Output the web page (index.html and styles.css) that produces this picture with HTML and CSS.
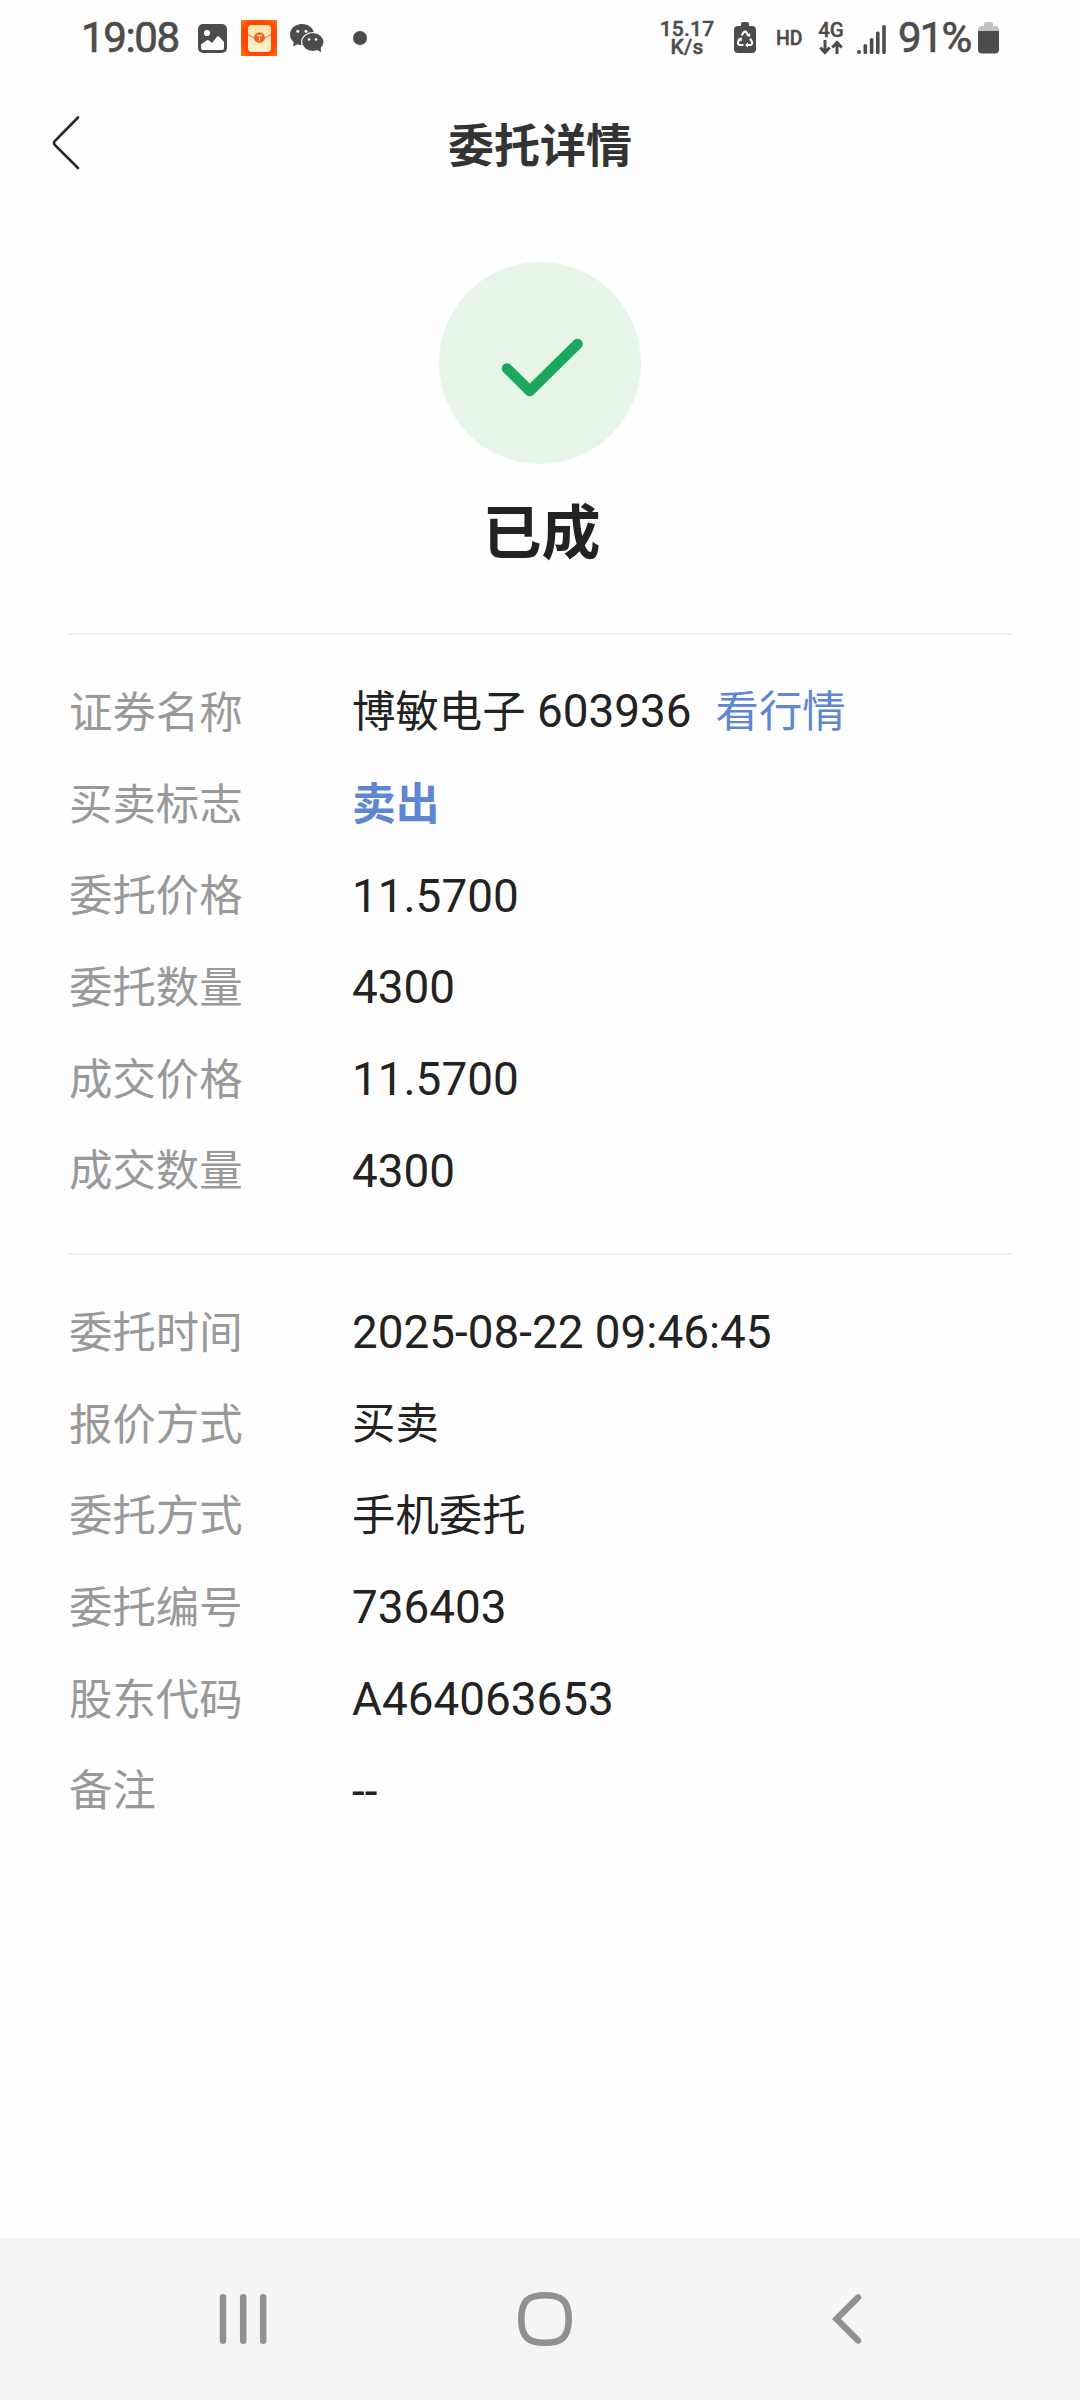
FILE: index.html
```html
<!DOCTYPE html>
<html lang="zh-CN">
<head>
<meta charset="utf-8">
<title>委托详情</title>
<link rel="stylesheet" href="styles.css">
</head>
<body>
<div class="screen">
  <header class="status">
    <div class="status-left">
      <span class="clock">19:08</span>
      <svg class="ico-photo" width="29" height="29" viewBox="0 0 29 29"><rect width="29" height="29" rx="5" fill="#4c4c4c"/><circle cx="9" cy="9" r="3.1" fill="#fefefe"/><path d="M3 20.5L9 16.300q1-.6 2 .2l3 2.500 5-6.200q1.200-1.300 2.400 0l4.600 5.200V24q0 2-2 2H5q-2 0-2-2z" fill="#fefefe"/></svg>
      <svg class="ico-packet" width="36" height="36" viewBox="0 0 36 36">
        <defs><radialGradient id="glow" r=".7"><stop offset="0" stop-color="#ff3d00"/><stop offset=".7" stop-color="#ff4a05"/><stop offset="1" stop-color="#ff7a0c"/></radialGradient><linearGradient id="paper" x2="0" y2="1"><stop offset="0" stop-color="#ffe3a8"/><stop offset="1" stop-color="#fff0cc"/></linearGradient></defs>
        <rect width="36" height="36" fill="url(#glow)"/><rect x="7" y="5" width="23" height="27" rx="4" fill="url(#paper)"/><path d="M7 14.500L15 19H22L30 14.500" fill="none" stroke="#f0642a" stroke-width="1"/><circle cx="18.500" cy="17.500" r="5.300" fill="#f05a22"/><path d="M15.800 15.500h5.400M18.500 15.500v5.200" stroke="#ffe3a8" stroke-width="1.400"/>
      </svg>
      <svg class="ico-chat" width="34" height="29" viewBox="0 0 34 29" fill="#4c4c4c"><ellipse cx="12" cy="10.500" rx="12" ry="10.500"/><path d="M4 16L3 22.500L10 19z"/><ellipse cx="22.800" cy="18" rx="11.700" ry="10" fill="#fefefe"/><ellipse cx="22.800" cy="18" rx="10.600" ry="9"/><path d="M26 25L31 28.500L30.500 22z"/><g fill="#fefefe"><circle cx="7.800" cy="7.200" r="1.500"/><circle cx="16" cy="7.200" r="1.500"/><circle cx="19" cy="15.500" r="1.250"/><circle cx="26" cy="15.500" r="1.250"/></g></svg>
      <span class="dot"></span>
    </div>
    <div class="status-right">
      <span class="speed"><span>15.17</span><span>K/s</span></span>
      <svg class="ico-saver" width="22" height="32" viewBox="0 0 22 32"><path d="M7 4V2Q7 0 9 0h4q2 0 2 2v2h3q4 0 4 4v19q0 4-4 4H4q-4 0-4-4V8Q0 4 4 4z" fill="#4c4c4c"/><g fill="none" stroke="#fefefe" stroke-width="2.100"><path d="M7.600 13.500L9.500 10.500Q11 8.800 12.500 10.500L14.300 13.500"/><path d="M16.200 16.500L18 20Q18.600 22.600 16 23H13"/><path d="M9.500 23H6Q3.400 22.600 4.100 20L6 16.500"/></g><path d="M12 13.800l4.200 1.300V11zM14 20.200v5.400L11.200 23zM3.400 17.300l4.200-2 .4 4z" fill="#fefefe"/></svg>
      <span class="hd">HD</span>
      <span class="net"><span>4G</span><svg width="24" height="15" viewBox="0 0 24 15" fill="none" stroke="#4c4c4c" stroke-width="3"><path d="M6 0v12M1.300 7.500L6 12.500l4.700-5M18 14V3M13.300 7.500L18 2.500l4.700 5"/></svg></span>
      <svg class="ico-signal" width="30" height="30" viewBox="0 0 30 30" fill="#4c4c4c"><rect x="0" y="25" width="4" height="4" rx="2"/><rect x="6.500" y="19" width="3.600" height="10" rx="1.600"/><rect x="12.800" y="13" width="3.600" height="16" rx="1.600"/><rect x="19" y="6.500" width="3.600" height="22.500" rx="1.600"/><rect x="25.200" y="0" width="3.600" height="29" rx="1.600"/></svg>
      <span class="percent">91%</span>
      <svg class="ico-battery" width="21" height="32" viewBox="0 0 21 32"><path d="M6 4V2q0-2 2-2h5q2 0 2 2v2h2q4 0 4 4v1H0V8q0-4 4-4z" fill="#c2c2c2"/><path d="M0 9h21v18.500q0 4-4 4H4q-4 0-4-4z" fill="#4c4c4c"/></svg>
    </div>
  </header>

  <nav class="titlebar">
    <svg width="30" height="56" viewBox="0 0 30 56"><path d="M26 2.500L2.800 26Q1.200 28 2.800 30L26 53" fill="none" stroke="#262626" stroke-width="2.600" stroke-linecap="round"/></svg>
    <h1>委托详情</h1>
  </nav>

  <section class="result">
    <svg width="202" height="202" viewBox="0 0 202 202"><circle cx="101" cy="101" r="101" fill="#e7f5e9"/><path d="M68 106.500L90.800 129L138.500 82" fill="none" stroke="#1ba75c" stroke-width="10.500" stroke-linecap="round" stroke-linejoin="round"/></svg>
    <h2>已成</h2>
  </section>

  <dl class="details">
    <div><dt>证券名称</dt><dd><span class="han">博敏电子</span> 603936<a class="han quote">看行情</a></dd></div>
    <div><dt>买卖标志</dt><dd><span class="han side">卖出</span></dd></div>
    <div><dt>委托价格</dt><dd>11.5700</dd></div>
    <div><dt>委托数量</dt><dd>4300</dd></div>
    <div><dt>成交价格</dt><dd>11.5700</dd></div>
    <div><dt>成交数量</dt><dd>4300</dd></div>
  </dl>
  <dl class="details">
    <div><dt>委托时间</dt><dd>2025-08-22 09:46:45</dd></div>
    <div><dt>报价方式</dt><dd><span class="han">买卖</span></dd></div>
    <div><dt>委托方式</dt><dd><span class="han">手机委托</span></dd></div>
    <div><dt>委托编号</dt><dd>736403</dd></div>
    <div><dt>股东代码</dt><dd>A464063653</dd></div>
    <div><dt>备注</dt><dd>--</dd></div>
  </dl>

  <footer class="navbar">
    <svg width="48" height="52" viewBox="0 0 48 52" stroke="#919191" stroke-width="6.500" stroke-linecap="round"><path d="M4 4.300v43.400M24.200 4.300v43.400M44.200 4.300v43.400"/></svg>
    <svg class="home" width="54" height="54" viewBox="0 0 54 54" fill="none" stroke="#919191" stroke-width="6.600"><path d="M27 3.300C43 3.300 50.700 8 50.700 27S43 50.700 27 50.700 3.300 46 3.300 27 11 3.300 27 3.300z"/></svg>
    <svg width="30" height="52" viewBox="0 0 30 52" fill="none" stroke="#919191" stroke-width="6.400" stroke-linecap="round"><path d="M26 4.500L4.500 26L26 47.500"/></svg>
  </footer>
</div>
</body>
</html>
```
FILE: styles.css
```css
* { box-sizing: border-box; }
body { margin: 0; background: #fefefe; }
svg { display: block; flex: none; }

.screen {
  width: 1080px;
  height: 2400px;
  display: flex;
  flex-direction: column;
  font-family: Roboto, "Noto Sans CJK SC", sans-serif;
  color: #222;
}

.status {
  height: 76px;
  display: flex;
  justify-content: space-between;
  padding: 0 81px;
  color: #4c4c4c;
  font-weight: 500;
  white-space: nowrap;
}
.status-left, .status-right { display: flex; align-items: center; }
.clock { width: 99px; font-size: 42px; letter-spacing: -1.400px; line-height: 74px; font-weight: 400; -webkit-text-stroke: .7px #4c4c4c; }
.ico-photo { margin: 1px 0 0 18px; }
.ico-packet { margin-left: 14px; }
.ico-chat { margin-left: 13px; }
.dot { width: 14px; height: 14px; margin-left: 29px; border-radius: 50%; background: #4c4c4c; }

.speed { width: 54px; display: flex; flex-direction: column; align-items: center; font-size: 21px; line-height: 18px; letter-spacing: .2px; -webkit-text-stroke: .4px #4c4c4c; }
.ico-saver { margin-left: 20px; }
.hd { width: 27px; margin-left: 20px; font-size: 19.500px; -webkit-text-stroke: .4px #4c4c4c; }
.net { width: 26px; margin-left: 15px; display: flex; flex-direction: column; align-items: center; gap: 1px; font-size: 20.500px; line-height: 18px; -webkit-text-stroke: .4px #4c4c4c; }
.ico-signal { margin: 4px 0 0 13px; }
.percent { width: 74px; margin-left: 11px; font-size: 42px; letter-spacing: -1.800px; line-height: 74px; font-weight: 400; -webkit-text-stroke: .7px #4c4c4c; }
.ico-battery { margin-left: 6px; }

.titlebar {
  height: 134px;
  display: grid;
  grid-template-columns: 1fr auto 1fr;
  align-items: center;
  padding: 0 52px;
}
h1 { margin: 0; padding-top: 5px; font-size: 46px; line-height: 60px; font-weight: 700; color: #333; }

.result {
  height: 423px;
  padding-top: 52px;
  display: flex;
  flex-direction: column;
  align-items: center;
}
h2 { margin: 26px 0 0; padding-left: 3px; font-size: 59px; line-height: 88px; font-weight: 700; }

.details {
  margin: 0 69px;
  height: 620px;
  padding-top: 31px;
  border-top: 2px solid #efefef;
}
.details div {
  height: 91.700px;
  display: grid;
  grid-template-columns: 283px 1fr;
  align-items: center;
}
dt { padding-top: 4px; font-size: 43.400px; line-height: 60px; color: #999; }
dd { margin: 0; padding-top: 1px; font-size: 45.850px; line-height: 60px; }
.han { font-size: 43.400px; }
.quote { margin-left: 24px; color: #5f86d3; }
.side { font-size: 43.800px; font-weight: 700; color: #5f86d3; }

.navbar {
  height: 162px;
  margin-top: auto;
  padding: 0 218px 0 219px;
  display: flex;
  justify-content: space-between;
  align-items: center;
  background: #f5f5f5;
}
.home { margin-right: 10px; }
```
